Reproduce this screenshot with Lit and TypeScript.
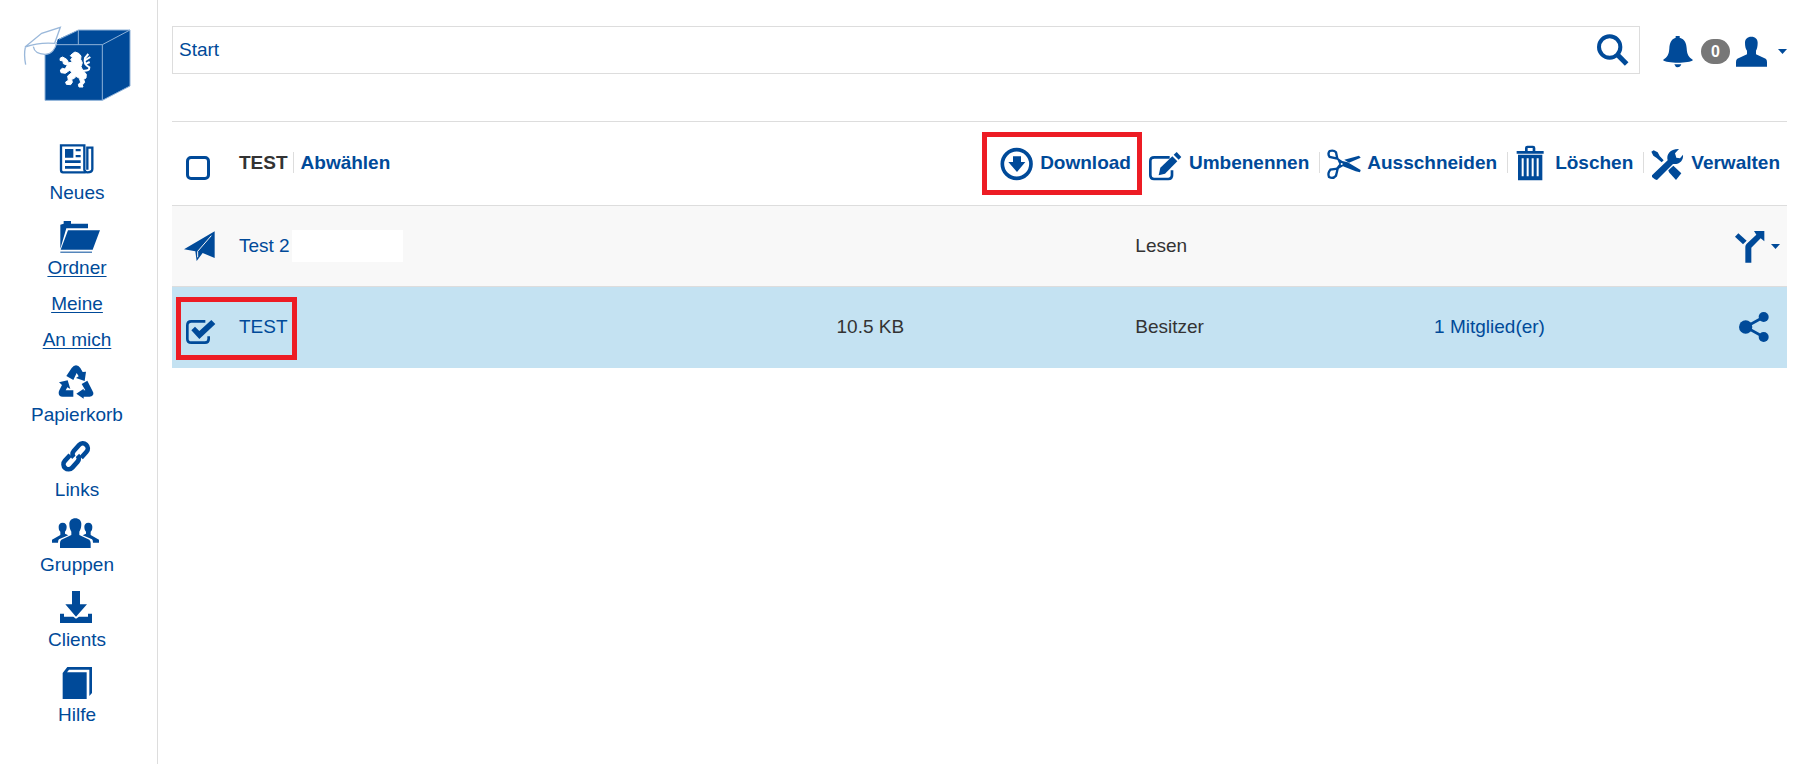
import { LitElement, html, svg, css, nothing, type SVGTemplateResult } from "lit";
import { customElement } from "lit/decorators.js";
import { classMap } from "lit/directives/class-map.js";

interface NavItem {
  label: string;
  icon?: SVGTemplateResult;
  active?: boolean;
}

const person = svg`<path d="M17 23C25 23 29 28 29 35C29 42 27 46 24 50V56L34 61L6 73Q3 76 3 83H-15V74L10 60V50C6 46 5 42 5 35C5 28 9 23 17 23Z"/>`;

const NAV: NavItem[] = [
  {
    label: "Neues",
    icon: svg`<path d="M86 88H18Q12 88 12 81V7H82V80Q84 88 91 88Q106 88 106 78V14H91V80" fill="none" stroke="currentColor" stroke-width="7"/>
      <path d="M24 18h25v26h-25zM56 18h15v7h-15zM56 36h15v7h-15zM24 52h47v8h-47zM24 69h47v8h-47z"/>`,
  },
  {
    label: "Ordner",
    active: true,
    icon: svg`<path d="M10 92V20L20 17V9H42V17H93V31H28Z"/><path d="M33 37H129L107 95H11Z"/><path d="M10 101H105V104H10Z"/>`,
  },
  { label: "Meine", active: true },
  { label: "An mich", active: true },
  {
    label: "Papierkorb",
    icon: svg`<path d="M49 45L28 33L44 9Q50 1 57 1Q65 1 70 9L77 21L87 20L83 48L57 39L65 34L59 24Z"/>
      <path d="M6 52L32 46L40 72L31 67L26 76H49V95H17Q5 95 5 84Q5 80 7 76L15 60Z"/>
      <path d="M74 57L91 47L107 79Q110 84 109 88Q107 95 98 95H80V101L58 86L80 71V76H85Z"/>`,
  },
  {
    label: "Links",
    icon: svg`<g transform="translate(56 49) rotate(-48)" fill="none" stroke="currentColor" stroke-width="14">
      <path d="M-8 -15H-32A15 15 0 0 0 -32 15H-8A14 14 0 0 0 6 2"/><path d="M8 15H32A15 15 0 0 0 32 -15H8A14 14 0 0 0 -6 -2"/></g>`,
  },
  {
    label: "Gruppen",
    icon: svg`${person}<g transform="translate(111 0) scale(-1 1)">${person}</g>
      <path d="M55 10C66 10 73 17 73 27C73 36 71 44 67 50V60L97 74Q101 78 101 84V99H9V84Q9 78 13 74L43 60V50C39 44 37 36 37 27C37 17 44 10 55 10Z"/>`,
  },
  {
    label: "Clients",
    icon: svg`<path d="M45 3H69V43H90L57 80L25 43H45Z"/><path d="M9 71H21V80H49L57 86L66 80H93V71H105V99H9Z"/>`,
  },
  {
    label: "Hilfe",
    icon: svg`<path d="M17 24L31 6H105V84L97 93V14H36L30 22H89V102H17Z"/>`,
  },
];

const ACTIONS: { label: string; marked?: boolean; icon: SVGTemplateResult }[] = [
  {
    label: "Download",
    marked: true,
    icon: svg`<circle cx="50" cy="57" r="43" fill="none" stroke="currentColor" stroke-width="11"/><path d="M39 34H63V51H76L51 81L25 51H39Z"/>`,
  },
  {
    label: "Umbenennen",
    icon: svg`<path d="M62 37H16Q4 37 4 48V91Q4 102 15 102H58Q69 102 69 91V76" fill="none" stroke="currentColor" stroke-width="8"/>
      <path d="M29 91L34 68L70 34L85 49L48 86Z"/><path d="M74 29L83 21L97 36L89 44Z"/>`,
  },
  {
    label: "Ausschneiden",
    icon: svg`<g fill="none" stroke="currentColor" stroke-width="7"><path d="M31 41L8 36Q1 26 8 18Q20 14 27 22Z"/><path d="M32 71L10 74Q1 84 6 96Q18 103 27 92Z"/></g>
      <path d="M27 35L46 48L62 52L101 75L99 82L86 79L48 64L34 72L28 68L37 57Z"/><path d="M52 44L96 32L101 38L66 53Z"/><circle cx="44" cy="57" r="3" fill="#fff"/>`,
  },
  {
    label: "Löschen",
    icon: svg`<path fill-rule="evenodd" d="M30 18V9Q30 2 37 2H54Q61 2 61 9V18H86V26H5V18ZM38 18V9H53V18Z"/>
      <path fill-rule="evenodd" d="M9 29H82V106H9ZM20 40V94H26V40ZM35 40V94H41V40ZM50 40V94H56V40ZM65 40V94H71V40Z"/>`,
  },
  {
    label: "Verwalten",
    icon: svg`<path d="M3 91L50 46C45 28 58 11 84 12L72 25L76 38L87 40L96 29C98 46 86 59 66 57L18 105Q13 105 3 96Z"/>
      <path d="M1 20L8 16L20 22L26 33L38 46L32 52L17 39L7 32Z"/><path d="M52 76L67 62L91 85L75 105L54 82Z"/>`,
  },
];

const LOGO = svg`
  <path d="M90 86L132 68L190 42H345V210L262 253H90Z" fill="#004a99"/>
  <g fill="none" stroke="#8fb2d8" stroke-width="3"><path d="M90 253V86H262V253Z"/><path d="M262 86L345 42V210L262 253"/><path d="M345 42H190V86M190 42L132 70"/></g>
  <path d="M30 93L80 52L136 34L126 78C122 98 110 114 90 115C68 114 58 108 55 92Z" fill="#fff"/>
  <g fill="none" stroke="#9ab8da" stroke-width="4"><path d="M30 93L80 52L136 34L119 82Q72 78 30 93Z"/><path d="M55 92C58 108 68 114 90 115C110 114 122 98 125 78"/><path d="M31 94Q26 115 32 146"/></g>
  <path d="M172 125L166 119L172 113L180 108L191 112L198 120L197 130L202 140L198 152L203 162L214 175L213 186L206 190L209 199L202 207L204 213H192L190 205L197 199L193 187L183 181L178 187L170 190L172 199L167 206L154 205L152 198L160 193L158 180L170 170L165 162L151 172L138 170L136 162L142 157L150 159L157 148L145 143L144 135L135 133L136 126L143 123L155 130L161 140L172 139L167 131Z" fill="#fff" stroke="#fff" stroke-width="3"/>
  <g fill="none" stroke="#fff" stroke-width="6"><path d="M203 164Q224 166 223 154Q205 145 210 126L220 114"/><path d="M208 134L226 123M209 145L224 138"/></g>`;

@customElement("app-root")
export class AppRoot extends LitElement {
  static styles = css`
    :host {
      --blue: #004a99;
      --line: #ddd;
      display: flex;
      min-height: 100vh;
      box-sizing: border-box;
      background: #fff;
      color: #333;
      font: 19px/22px "Liberation Sans", Arial, sans-serif;
    }
    * { box-sizing: border-box; }
    a { color: var(--blue); text-decoration: none; }
    svg { display: block; flex: none; fill: currentColor; overflow: visible; }
    button {
      display: flex;
      align-items: center;
      padding: 0;
      border: 0;
      background: none;
      color: var(--blue);
      font: inherit;
      cursor: pointer;
    }
    .sidebar {
      flex: none;
      width: 158px;
      padding: 16px 3px 15px 0;
      border-right: 1px solid var(--line);
    }
    .logo { display: block; width: 125px; margin: 0 auto 32px 15px; }
    .nav { display: flex; flex-direction: column; gap: 14px; margin: 0; padding: 0; list-style: none; }
    .nav-link { display: flex; flex-direction: column; align-items: center; gap: 6px; }
    .active { text-decoration: underline; text-underline-offset: 2px; }
    .main { flex: 1; min-width: 0; padding: 26px 13px 26px 14px; }
    .topbar { display: flex; align-items: center; margin-bottom: 47px; }
    .path {
      flex: 1;
      display: flex;
      align-items: center;
      justify-content: space-between;
      height: 48px;
      padding: 0 10px 0 6px;
      border: 1px solid var(--line);
    }
    .account { display: flex; align-items: center; gap: 6px; margin-left: 23px; padding-top: 2px; }
    .bell { gap: 6px; }
    .user { gap: 10px; }
    .badge {
      width: 29px;
      border-radius: 13px;
      background: #777;
      color: #fff;
      font-size: 16px;
      line-height: 25px;
      font-weight: bold;
      text-align: center;
    }
    .toolbar {
      display: flex;
      align-items: center;
      min-height: 84px;
      padding-bottom: 2px;
      border-top: 1px solid var(--line);
      font-weight: bold;
    }
    .pick { flex: none; width: 67px; padding-left: 14px; }
    .check { display: grid; width: 24px; height: 24px; margin-top: 10px; }
    .check input { grid-area: 1 / 1; appearance: none; width: 24px; height: 24px; margin: 0; border: 3px solid var(--blue); border-radius: 5px; }
    .check input:checked { border: 0; }
    .check svg { grid-area: 1 / 1; color: var(--blue); pointer-events: none; }
    .selected { padding-right: 5px; }
    .divided { border-left: 1px solid var(--line); padding-left: 7px; line-height: 21px; }
    .actions { display: flex; align-items: center; margin: 0 7px 0 auto; padding: 0; list-style: none; }
    .action { position: relative; display: flex; align-items: center; height: 36px; }
    .action button { gap: 6px; padding: 0 10px 0 8px; font-weight: bold; }
    .action:last-child button { padding-right: 0; }
    .action + .action::before { content: ""; width: 1px; height: 21px; margin-right: -1px; background: var(--line); }
    .mark { position: absolute; z-index: 1; border: 5px solid #ed1c24; pointer-events: none; }
    .mark-action { inset: -13px -1px -14px -10px; }
    .mark-row { top: 10px; left: 4px; width: 121px; height: 63px; }
    .files { width: 100%; table-layout: fixed; border-collapse: collapse; }
    .files td { height: 81px; padding: 0; border-top: 1px solid var(--line); }
    .files td.pick { position: relative; padding-left: 14px; }
    .files td:last-child { padding-left: 2px; }
    .c-pick { width: 67px; }
    .c-name { width: 37%; }
    .c-info { width: 18.5%; }
    .row { background: #f8f8f8; }
    .row.chosen { background: #c4e2f2; }
    .name { display: flex; align-items: center; gap: 2px; }
    .blank { width: 111px; height: 32px; background: #fff; }
    .plane { margin-left: -2px; color: var(--blue); }
    .files button { gap: 4px; }
  `;

  private caret() {
    return html`<svg width="9" height="5" viewBox="0 0 9 5" aria-hidden="true"><path d="M0 0H9L4.500 5Z"/></svg>`;
  }

  private glyph(content: SVGTemplateResult) {
    return html`<svg width="32" height="32" viewBox="0 0 96 96" aria-hidden="true">${content}</svg>`;
  }

  render() {
    return html`
      <aside class="sidebar">
        <a class="logo" href="#" aria-label="Startseite">
          <svg width="125" height="95" viewBox="0 0 375 285" aria-hidden="true">${LOGO}</svg>
        </a>
        <nav>
          <ul class="nav">
            ${NAV.map((item) => html`<li>
              <a class="nav-link ${classMap({ active: !!item.active })}" href="#">
                ${item.icon ? html`<svg width="40" height="33" viewBox="0 0 120 99" aria-hidden="true">${item.icon}</svg>` : nothing}
                <span>${item.label}</span>
              </a>
            </li>`)}
          </ul>
        </nav>
      </aside>
      <main class="main">
        <header class="topbar">
          <div class="path">
            <a href="#">Start</a>
            <button type="button" aria-label="Suchen">
              ${this.glyph(svg`<circle cx="38" cy="39" r="32" fill="none" stroke="currentColor" stroke-width="12"/><path d="M60 61L89 90" stroke="currentColor" stroke-width="15"/>`)}
            </button>
          </div>
          <div class="account">
            <button class="bell" type="button" aria-label="Benachrichtigungen">
              ${this.glyph(svg`<path d="M38 3H50V8C66 12 70 25 71 40C72 58 76 66 90 75C80 86 10 86 0 75C14 66 18 58 19 40C20 25 24 12 38 8Z"/><path d="M34 88H55Q52 97 44 97Q37 97 34 88Z"/>`)}
              <span class="badge">0</span>
            </button>
            <button class="user" type="button" aria-label="Konto">
              ${this.glyph(svg`<path d="M46 5C58 5 65 12 65 23C65 34 63 42 60 47V58L89 71Q93 74 93 81V95H0V81Q0 74 4 71L33 58V47C29 42 27 34 27 23C27 12 34 5 46 5Z"/>`)}
              ${this.caret()}
            </button>
          </div>
        </header>
        <div class="toolbar">
          <div class="pick"><label class="check"><input type="checkbox" aria-label="Alle auswählen" /></label></div>
          <span class="selected">TEST</span>
          <a class="divided" href="#">Abwählen</a>
          <ul class="actions">
            ${ACTIONS.map((action) => html`<li class="action">
              <button type="button">
                <svg width="34" height="36" viewBox="0 0 102 108" aria-hidden="true">${action.icon}</svg>
                ${action.label}
              </button>
              ${action.marked ? html`<span class="mark mark-action"></span>` : nothing}
            </li>`)}
          </ul>
        </div>
        <table class="files">
          <colgroup>
            <col class="c-pick" /><col class="c-name" /><col class="c-info" /><col class="c-info" /><col class="c-info" /><col />
          </colgroup>
          <tbody>
            <tr class="row">
              <td class="pick">
                <svg class="plane" width="32" height="32" viewBox="0 0 96 96" aria-hidden="true"><path d="M0 58L92 4V84L56 69L38 93L34 64Z"/><path d="M82 17L41 64V82" fill="none" stroke="#f8f8f8" stroke-width="3"/></svg>
              </td>
              <td><div class="name"><a href="#">Test 2</a><span class="blank"></span></div></td>
              <td></td>
              <td>Lesen</td>
              <td></td>
              <td>
                <button type="button" aria-label="Aktionen">
                  ${this.glyph(svg`<path d="M31 98V50Q31 45 35 41L64 14L57 3H88V34L77 25L49 53V98Z"/><path d="M0 20L10 10L35 32L24 43Z"/>`)}
                  ${this.caret()}
                </button>
              </td>
            </tr>
            <tr class="row chosen">
              <td class="pick">
                <label class="check">
                  <input type="checkbox" checked aria-label="TEST auswählen" />
                  <svg width="24" height="24" viewBox="0 0 72 72" aria-hidden="true"><path d="M58 4H16Q4 4 4 16V57Q4 68 16 68H57Q68 68 68 57V49" fill="none" stroke="currentColor" stroke-width="8"/><path d="M16 31L27 20L40 33L76 0L88 12L40 57Z"/></svg>
                </label>
                <span class="mark mark-row"></span>
              </td>
              <td><a href="#">TEST</a></td>
              <td>10.5 KB</td>
              <td>Besitzer</td>
              <td><a href="#">1 Mitglied(er)</a></td>
              <td>
                <button type="button" aria-label="Teilen">
                  ${this.glyph(svg`<g transform="translate(12 3)"><circle cx="20" cy="45" r="20"/><circle cx="74" cy="15" r="15"/><circle cx="74" cy="75" r="15"/><path d="M74 15L20 45L74 75" fill="none" stroke="currentColor" stroke-width="8"/></g>`)}
                </button>
              </td>
            </tr>
          </tbody>
        </table>
      </main>
    `;
  }
}
